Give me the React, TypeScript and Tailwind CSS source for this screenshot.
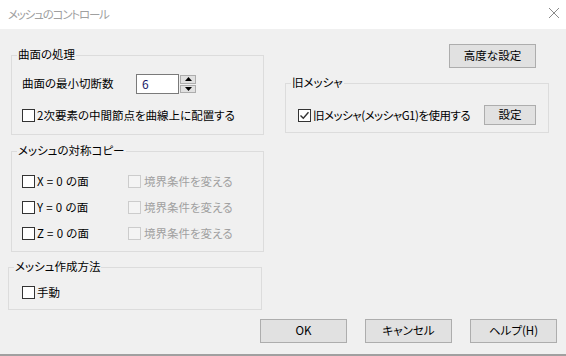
import React from "react";

function Box({ checked = false, disabled = false }: { checked?: boolean; disabled?: boolean }) {
  return (
    <span
      className={
        disabled
          ? "flex h-[13px] w-[13px] shrink-0 items-center justify-center border border-[#cccccc] bg-[#f4f4f4]"
          : "flex h-[13px] w-[13px] shrink-0 items-center justify-center border border-[#333333] bg-white"
      }
    >
      {checked && (
        <svg width="11" height="11" viewBox="0 0 11 11">
          <path d="M1.5 5.5 L4.3 8.3 L9.5 2.2" fill="none" stroke="#333" strokeWidth="1.4" />
        </svg>
      )}
    </span>
  );
}

function Group({ title, className, children }: { title: string; className: string; children?: React.ReactNode }) {
  return (
    <div className={"relative border border-[#dcdcdc] " + className}>
      <span className="absolute left-[5px] top-[-10px] bg-[#f0f0f0] px-[1px] leading-[16px]">{title}</span>
      {children}
    </div>
  );
}

function Btn({ children, className }: { children: React.ReactNode; className: string }) {
  return (
    <div className={"flex items-center justify-center border border-[#adadad] bg-[#e1e1e1] " + className}>
      {children}
    </div>
  );
}

export default function App() {
  return (
    <div className="flex h-[356px] w-[566px] flex-col overflow-hidden whitespace-nowrap font-['Noto_Sans_CJK_JP','Noto_Sans',sans-serif] text-[11.5px] text-black [font-feature-settings:'palt']">
      {/* title bar */}
      <div className="flex h-[29px] shrink-0 items-center justify-between bg-white pl-[8px] pr-[6px]">
        <span className="text-[11.5px] tracking-[-1.2px] text-[#a0a0a0]">メッシュのコントロール</span>
        <svg width="12" height="12" viewBox="0 0 12 12" className="mb-[3px]">
          <path d="M1 1 L11 11 M11 1 L1 11" stroke="#8a8a8a" strokeWidth="1" />
        </svg>
      </div>

      {/* body */}
      <div className="flex flex-1 flex-col bg-[#f0f0f0]">
        <div className="flex">
          {/* left column */}
          <div className="flex w-[264px] flex-col">
            <Group title="曲面の処理" className="ml-[11px] mt-[26px] h-[80px] w-[253px] pl-[10px]">
              <div className="mt-[18px] flex h-[20px] items-center">
                <span className="w-[114px]">曲面の最小切断数</span>
                <div className="flex h-[20px] w-[43px] items-center border border-[#7a7a7a] bg-white pl-[5px] text-[12px] text-[#1a1a66]">
                  6
                </div>
                <div className="ml-[1px] flex h-[18px] w-[16px] flex-col gap-[1px]">
                  <div className="flex h-[8.5px] flex-1 items-center justify-center border border-[#adadad] bg-[#e1e1e1]">
                    <svg width="7" height="4" viewBox="0 0 7 4">
                      <path d="M0 4 L3.5 0 L7 4 Z" fill="#000" />
                    </svg>
                  </div>
                  <div className="flex h-[8.5px] flex-1 items-center justify-center border border-[#adadad] bg-[#e1e1e1]">
                    <svg width="7" height="4" viewBox="0 0 7 4">
                      <path d="M0 0 L3.5 4 L7 0 Z" fill="#000" />
                    </svg>
                  </div>
                </div>
              </div>
              <div className="mt-[15px] flex h-[13px] items-center gap-[2px]">
                <Box />
                <span>2次要素の中間節点を曲線上に配置する</span>
              </div>
            </Group>

            <Group title="メッシュの対称コピー" className="ml-[11px] mt-[16px] flex h-[101px] w-[253px] flex-col gap-[13px] pl-[10px] pt-[23px]">
              {["X = 0 の面", "Y = 0 の面", "Z = 0 の面"].map((t) => (
                <div key={t} className="flex h-[13px] items-center">
                  <div className="flex w-[106px] items-center gap-[2px]">
                    <Box />
                    <span className="whitespace-pre tracking-[0.3px]">{t}</span>
                  </div>
                  <div className="flex items-center gap-[3px] text-[#a0a0a0]">
                    <Box disabled />
                    <span>境界条件を変える</span>
                  </div>
                </div>
              ))}
            </Group>

            <Group title="メッシュ作成方法" className="ml-[8px] mt-[15px] h-[43px] w-[254px] pl-[13px] pt-[18px]">
              <div className="flex h-[13px] items-center gap-[2px]">
                <Box />
                <span>手動</span>
              </div>
            </Group>
          </div>

          {/* right column */}
          <div className="flex flex-1 flex-col pl-[21px]">
            <Btn className="ml-[164px] mt-[15px] h-[24px] w-[87px]">高度な設定</Btn>
            <Group title="旧メッシャ" className="mt-[15px] flex h-[50px] w-[264px] items-start pl-[12px] pt-[21px]">
              <div className="mt-[4px] flex h-[13px] w-[186px] shrink-0 items-center gap-[2px]">
                <Box checked />
                <span className="tracking-[-0.5px]">旧メッシャ(メッシャG1)を使用する</span>
              </div>
              <Btn className="h-[20px] w-[52px] shrink-0">設定</Btn>
            </Group>
          </div>
        </div>

        {/* footer */}
        <div className="ml-[260px] mt-[9px] flex gap-[18px]">
          <Btn className="h-[24px] w-[87px]">OK</Btn>
          <Btn className="h-[24px] w-[87px]">キャンセル</Btn>
          <Btn className="h-[24px] w-[87px]">ヘルプ(H)</Btn>
        </div>
        <div className="flex-1" />
        <div className="h-[2px] bg-[#a0a0a0]" />
      </div>
    </div>
  );
}
